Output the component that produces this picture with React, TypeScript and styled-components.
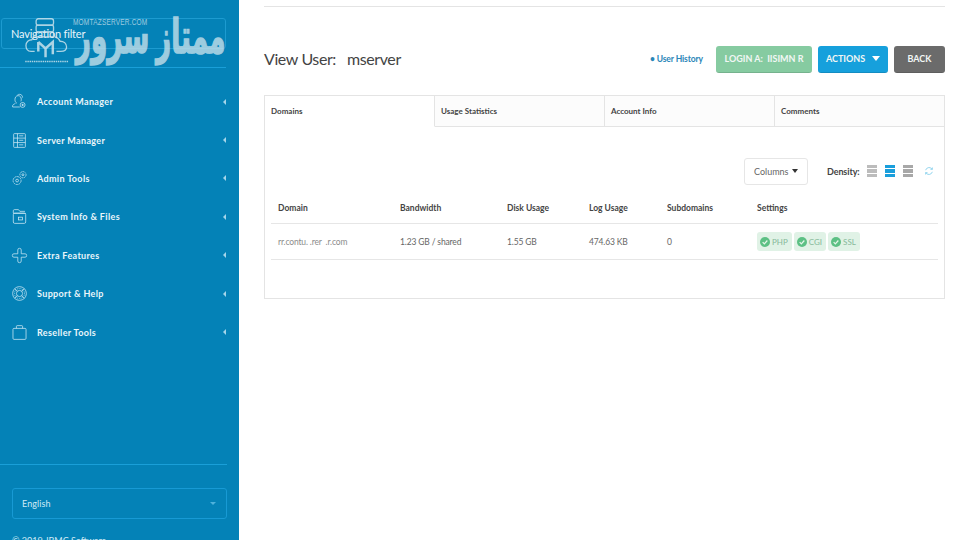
import * as React from 'react';
import styled, { createGlobalStyle } from 'styled-components';

const GlobalStyle = createGlobalStyle`
  html, body {
    margin: 0;
    padding: 0;
    height: 100%;
    background: #ffffff;
    overflow: hidden;
  }
  body {
    font-family: Lato, "Open Sans", sans-serif;
    color: #333333;
  }
  * {
    box-sizing: border-box;
  }
`;

const navItems: { label: string; icon: React.ReactNode }[] = [
  {
    label: 'Account Manager',
    icon: (
      <>
        <path d="M6 15c-2.4.8-4 1.8-4 3.4V20h10.5" />
        <path d="M8 14.5c-1.8-1.2-2.6-3-2.6-5.2C5.400 6 7 3.500 10 3.500s4.600 2.500 4.600 5.500c0 1-.2 2-.6 2.800" />
        <path d="M9 2.600C10 1.700 11.300 1.300 12.500 1.500c2.300.3 4 2.200 4 4.800" />
        <circle cx="16.500" cy="17" r="3.600" />
        <circle cx="16.500" cy="17" r="1" fill="#cfeaf6" />
      </>
    ),
  },
  {
    label: 'Server Manager',
    icon: (
      <>
        <rect x="3.500" y="2" width="17" height="20" rx="1" />
        <path d="M3.500 8.500h17M3.500 15h17M9 2v20M11.500 5.200h6M11.500 11.700h6M11.500 18.300h6" />
      </>
    ),
  },
  {
    label: 'Admin Tools',
    icon: (
      <>
        <circle cx="8.500" cy="15" r="5.800" strokeDasharray="3 .8" />
        <circle cx="8.500" cy="15" r="2" />
        <circle cx="17" cy="6.500" r="4.500" strokeDasharray="2.500 .8" />
        <circle cx="17" cy="6.500" r="1.400" />
      </>
    ),
  },
  {
    label: 'System Info & Files',
    icon: (
      <>
        <path d="M3 7V3.500C3 2.700 3.700 2 4.500 2h6l2 2.500H20" />
        <rect x="3" y="7" width="18" height="15" rx="2" />
        <path d="M3 7.500h18" />
        <rect x="10.500" y="13" width="6" height="4" />
      </>
    ),
  },
  {
    label: 'Extra Features',
    icon: (
      <path d="M9.500 4a2.500 2.500 0 0 1 5 0v5.500H20a2.500 2.500 0 0 1 0 5h-5.500V20a2.500 2.500 0 0 1-5 0v-5.500H4a2.500 2.500 0 0 1 0-5h5.500z" />
    ),
  },
  {
    label: 'Support & Help',
    icon: (
      <>
        <circle cx="12" cy="12" r="10" />
        <circle cx="12" cy="12" r="4.500" />
        <path d="M5 5l3.800 3.800M19 5l-3.800 3.800M5 19l3.800-3.800M19 19l-3.800-3.800" />
        <circle cx="12" cy="12" r="7.300" strokeDasharray="1.200 1.500" />
      </>
    ),
  },
  {
    label: 'Reseller Tools',
    icon: (
      <>
        <rect x="2.500" y="6" width="19" height="16" rx="1.500" />
        <path d="M7.500 6V3c0-.6.400-1 1-1h7c.6 0 1 .4 1 1v3" />
      </>
    ),
  },
];

const tabs = ['Domains', 'Usage Statistics', 'Account Info', 'Comments'];

const badges = ['PHP', 'CGI', 'SSL'];

const densities: { color: string; gap: number }[] = [
  { color: '#bcbcbc', gap: 1 },
  { color: '#1a9fdc', gap: 1 },
  { color: '#a8a8a8', gap: 0.5 },
];

const App: React.FC = () => {
  return (
    <Page>
      <GlobalStyle />
      <Sidebar>
        <FilterArea>
          <FilterBox>Navigation filter</FilterBox>
          <Watermark>
            <WatermarkIcon viewBox="0 0 60 62" fill="none" stroke="#d5e8f0" strokeWidth="1.800">
              <rect x="15" y="1" width="24" height="9" rx="3" />
              <rect x="15" y="10" width="24" height="9" rx="2" />
              <rect x="15" y="19" width="24" height="7" rx="2" />
              <path d="M13 46H8C3 46 1 42 1 38c0-5 4-8 8-8 1-3 3-4 6-4M41 26c3 1 6 3 7 6 5 0 9 3 9 8s-4 6-8 6h-6" />
              <path d="M18 33l10 9 10-9v17M18 33v13M28 42v12" strokeWidth="3.400" />
              <path d="M0 60h60" strokeDasharray="2 1" strokeWidth="2" />
            </WatermarkIcon>
            <WatermarkDomain>MOMTAZSERVER.COM</WatermarkDomain>
            <WatermarkName>ممتاز سرور</WatermarkName>
          </Watermark>
        </FilterArea>
        <Nav>
          {navItems.map((item) => (
            <NavItem key={item.label}>
              <NavIcon viewBox="0 0 24 24" fill="none" stroke="#cfeaf6" strokeWidth="1.100">
                {item.icon}
              </NavIcon>
              <NavLabel>{item.label}</NavLabel>
              <NavCaret />
            </NavItem>
          ))}
        </Nav>
        <SidebarFooter>
          <LanguageSelect>
            English
            <SelectCaret />
          </LanguageSelect>
          <Copyright>© 2019 JBMC Software</Copyright>
        </SidebarFooter>
      </Sidebar>
      <Main>
        <TopRule />
        <Header>
          <PageTitle>
            View User:<TitleName>mserver</TitleName>
          </PageTitle>
          <HeaderActions>
            <HistoryLink>• User History</HistoryLink>
            <ActionButton $bg="#86cba1" $width={96}>
              LOGIN A:&nbsp;&nbsp;IISIMN R
            </ActionButton>
            <ActionButton $bg="#16a0dc" $width={70}>
              ACTIONS
              <ButtonCaret />
            </ActionButton>
            <ActionButton $bg="#6b6b6b" $width={51}>
              BACK
            </ActionButton>
          </HeaderActions>
        </Header>
        <Panel>
          <TabRow>
            {tabs.map((tab, i) => (
              <Tab key={tab} $active={i === 0}>
                {tab}
              </Tab>
            ))}
          </TabRow>
          <TabBody>
            <Toolbar>
              <ColumnsButton>
                Columns
                <DarkCaret />
              </ColumnsButton>
              <DensityLabel>Density:</DensityLabel>
              <DensityGroup>
                {densities.map((d, i) => (
                  <DensityIcon key={i} $color={d.color} $gap={d.gap}>
                    <span />
                    <span />
                    <span />
                  </DensityIcon>
                ))}
              </DensityGroup>
              <RefreshIcon viewBox="0 0 24 24" fill="none" stroke="#7fcdea" strokeWidth="2">
                <path d="M4 10a8.500 8.500 0 0 1 14.500-3.500L20 8M20 3.500V8h-4.500" />
                <path d="M20 14a8.500 8.500 0 0 1-14.500 3.500L4 16M4 20.500V16h4.500" />
              </RefreshIcon>
            </Toolbar>
            <Table>
              <HeadRow>
                <Cell>Domain</Cell>
                <Cell>Bandwidth</Cell>
                <Cell>Disk Usage</Cell>
                <Cell>Log Usage</Cell>
                <Cell>Subdomains</Cell>
                <Cell>Settings</Cell>
              </HeadRow>
              <BodyRow>
                <DomainCell>rr.contu. .rer  .r.com</DomainCell>
                <Cell>1.23 GB / shared</Cell>
                <Cell>1.55 GB</Cell>
                <Cell>474.63 KB</Cell>
                <Cell>0</Cell>
                <BadgeCell>
                  {badges.map((b) => (
                    <Badge key={b}>
                      <BadgeCheck viewBox="0 0 12 12">
                        <circle cx="6" cy="6" r="6" fill="#5cc084" />
                        <path d="M3.200 6.200l2 2 3.600-4" fill="none" stroke="#e6f5ea" strokeWidth="1.500" />
                      </BadgeCheck>
                      {b}
                    </Badge>
                  ))}
                </BadgeCell>
              </BodyRow>
            </Table>
          </TabBody>
        </Panel>
      </Main>
    </Page>
  );
};

export default App;

const Page = styled.div`
  display: flex;
  width: 960px;
  height: 540px;
  overflow: hidden;
`;

const Sidebar = styled.aside`
  width: 239px;
  height: 540px;
  flex: none;
  background: #0482b7;
  display: flex;
  flex-direction: column;
  overflow: hidden;
`;

const FilterArea = styled.div`
  position: relative;
  height: 68px;
  margin-right: 13px;
  padding: 18px 0 0 1px;
  border-bottom: 1px solid #1a9fd8;
`;

const FilterBox = styled.div`
  height: 31px;
  padding-left: 9px;
  border: 1px solid #1d9bd0;
  border-radius: 3px;
  font-size: 11px;
  letter-spacing: -0.2px;
  line-height: 30px;
  color: #e8f5fb;
`;

const Watermark = styled.div`
  position: absolute;
  left: 22px;
  top: 12px;
  width: 206px;
  height: 52px;
  color: #c4dfea;
  pointer-events: none;
`;

const WatermarkIcon = styled.svg`
  position: absolute;
  left: 1px;
  top: 6px;
  width: 48px;
  height: 45px;
  opacity: 0.8;
`;

const WatermarkDomain = styled.div`
  position: absolute;
  left: 51px;
  top: 5px;
  font-family: "Liberation Sans", sans-serif;
  font-size: 6.500px;
  letter-spacing: 0.2px;
  opacity: 0.8;
  white-space: nowrap;
  transform-origin: left top;
  transform: scaleY(1.25);
`;

const WatermarkName = styled.div`
  position: absolute;
  right: 2px;
  top: -6px;
  direction: rtl;
  font-family: "DejaVu Sans", sans-serif;
  font-size: 32px;
  font-weight: 700;
  line-height: 60px;
  word-spacing: -3px;
  white-space: nowrap;
  opacity: 0.8;
  -webkit-text-stroke: 1px #c4dfea;
  transform-origin: right center;
  transform: scale(0.82, 1.5);
`;

const Nav = styled.nav`
  display: flex;
  flex-direction: column;
  padding-top: 14.500px;
  flex: 1;
`;

const NavItem = styled.div`
  height: 38.4px;
  display: flex;
  align-items: center;
  padding: 0 12px;
`;

const NavIcon = styled.svg`
  width: 15px;
  height: 15px;
  flex: none;
  margin-right: 10px;
  transform: scale(1.1);
`;

const NavLabel = styled.span`
  flex: 1;
  font-size: 9px;
  font-weight: 700;
  letter-spacing: 0.35px;
  color: #eaf6fb;
`;

const NavCaret = styled.span`
  width: 0;
  height: 0;
  margin-right: 1px;
  border-top: 3px solid transparent;
  border-bottom: 3px solid transparent;
  border-right: 3px solid #a5d5ea;
`;

const SidebarFooter = styled.div`
  height: 76px;
  flex: none;
  margin-right: 12px;
  border-top: 1px solid #1a9fd8;
  padding: 23px 0 0 12px;
`;

const LanguageSelect = styled.div`
  display: flex;
  align-items: center;
  justify-content: space-between;
  height: 31px;
  padding: 0 10px 0 9px;
  border: 1px solid #189ad4;
  border-radius: 3px;
  font-size: 9px;
  letter-spacing: 0.1px;
  color: #cfeaf6;
`;

const SelectCaret = styled.span`
  width: 0;
  height: 0;
  border-left: 3px solid transparent;
  border-right: 3px solid transparent;
  border-top: 3px solid #4fb2dc;
`;

const Copyright = styled.div`
  margin-top: 16px;
  font-size: 9px;
  line-height: 12px;
  color: #cfeaf6;
  white-space: nowrap;
`;

const Main = styled.main`
  flex: 1;
  padding: 6px 15px 0 25px;
  min-width: 0;
`;

const TopRule = styled.div`
  height: 1px;
  background: #e4e4e4;
`;

const Header = styled.header`
  display: flex;
  align-items: center;
  justify-content: space-between;
  height: 88px;
  padding-top: 16px;
`;

const PageTitle = styled.h1`
  margin: 0 0 2px;
  font-size: 16px;
  letter-spacing: -0.4px;
  font-weight: 400;
  color: #444444;
`;

const TitleName = styled.span`
  margin-left: 11px;
`;

const HeaderActions = styled.div`
  display: flex;
  align-items: center;
`;

const HistoryLink = styled.a`
  font-size: 8.500px;
  letter-spacing: -0.1px;
  font-weight: 700;
  color: #2a86b8;
  margin-right: 7px;
`;

const ActionButton = styled.button<{ $bg: string; $width: number }>`
  display: flex;
  align-items: center;
  justify-content: center;
  width: ${(p) => p.$width}px;
  height: 27px;
  margin-left: 6px;
  padding: 0;
  border: 0;
  border-bottom: 1px solid rgba(0, 0, 0, 0.12);
  border-radius: 3px;
  background: ${(p) => p.$bg};
  font-family: inherit;
  font-size: 9px;
  font-weight: 700;
  color: #f2f7f5;
  white-space: nowrap;
`;

const ButtonCaret = styled.span`
  margin-left: 7px;
  border-left: 4px solid transparent;
  border-right: 4px solid transparent;
  border-top: 5px solid #ffffff;
`;

const Panel = styled.section`
  height: 204px;
  border: 1px solid #e4e4e4;
`;

const TabRow = styled.div`
  display: grid;
  grid-template-columns: 170px 170px 170px 1fr;
  height: 31px;
`;

const Tab = styled.div<{ $active: boolean }>`
  display: flex;
  align-items: center;
  padding-left: 6px;
  font-size: 8px;
  font-weight: 700;
  color: #444444;
  background: ${(p) => (p.$active ? '#ffffff' : '#fcfcfc')};
  border-bottom: 1px solid ${(p) => (p.$active ? 'transparent' : '#e4e4e4')};
  border-right: 1px solid #e4e4e4;

  &:last-child {
    border-right: 0;
  }
`;

const TabBody = styled.div`
  padding: 30px 6px 0;
`;

const Toolbar = styled.div`
  display: flex;
  align-items: center;
  height: 28px;
  padding-left: 473px;
`;

const ColumnsButton = styled.div`
  display: flex;
  align-items: center;
  justify-content: space-between;
  width: 64px;
  height: 27px;
  padding: 0 9px 0 9px;
  border: 1px solid #e6e6e6;
  border-radius: 3px;
  font-size: 9px;
  color: #666666;
`;

const DarkCaret = styled.span`
  border-left: 3.500px solid transparent;
  border-right: 3.500px solid transparent;
  border-top: 4px solid #333333;
`;

const DensityLabel = styled.span`
  margin-left: 19px;
  font-size: 9px;
  letter-spacing: -0.1px;
  font-weight: 700;
  color: #444444;
`;

const DensityGroup = styled.div`
  display: flex;
  gap: 8px;
  margin-left: 7px;
`;

const DensityIcon = styled.div<{ $color: string; $gap: number }>`
  display: flex;
  flex-direction: column;
  justify-content: space-between;
  width: 10px;
  height: 13px;

  span {
    height: ${(p) => 4.3 - p.$gap}px;
    background: ${(p) => p.$color};
  }
`;

const RefreshIcon = styled.svg`
  width: 10px;
  height: 10px;
  margin-left: 11px;
`;

const Table = styled.div`
  margin-top: 9px;
`;

const columns = '122px 107px 82px 78px 90px 1fr';

const HeadRow = styled.div`
  display: grid;
  grid-template-columns: ${columns};
  align-items: center;
  height: 30px;
  padding-left: 7px;
  padding-bottom: 1px;
  border-bottom: 1px solid #e6e6e6;
  font-size: 8.500px;
  font-weight: 700;
  color: #444444;
`;

const BodyRow = styled.div`
  display: grid;
  grid-template-columns: ${columns};
  align-items: center;
  height: 36px;
  padding-left: 7px;
  border-bottom: 1px solid #e6e6e6;
  font-size: 8.500px;
  letter-spacing: -0.15px;
  color: #666666;
`;

const Cell = styled.div`
  white-space: nowrap;
`;

const DomainCell = styled(Cell)`
  white-space: pre;
  color: #8c8c8c;
`;

const BadgeCell = styled.div`
  display: flex;
  gap: 2px;
`;

const Badge = styled.div`
  display: flex;
  align-items: center;
  gap: 2px;
  height: 19px;
  padding: 0 4px 0 3px;
  border-radius: 3px;
  background: #e0f2e6;
  font-size: 8px;
  letter-spacing: 0;
  color: #86b99a;
`;

const BadgeCheck = styled.svg`
  width: 10px;
  height: 10px;
`;
